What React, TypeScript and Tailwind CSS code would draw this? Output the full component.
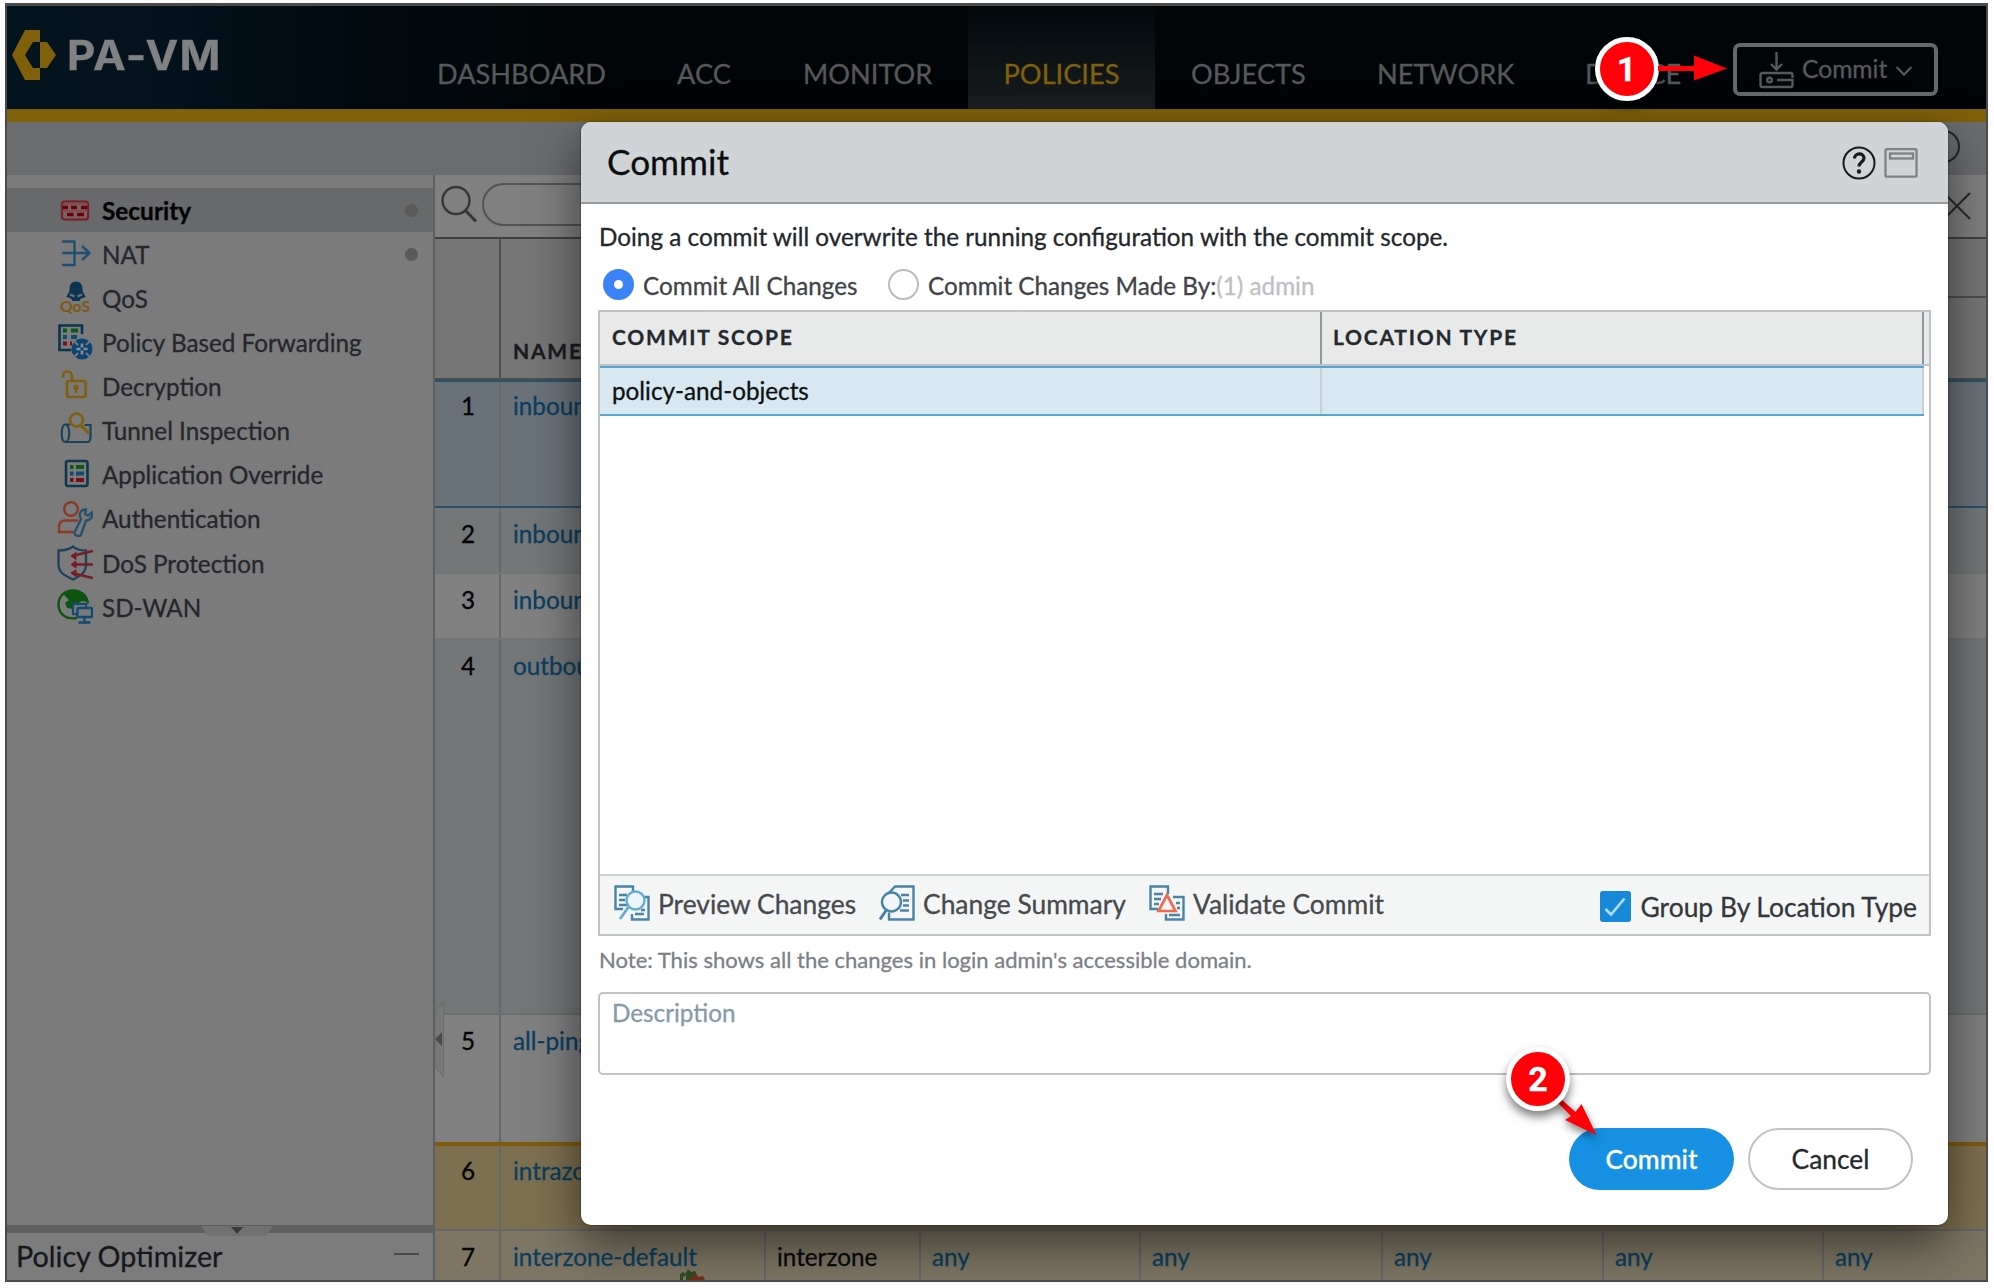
import React from "react";

function Circle({ n }: { n: string }) {
  return (
    <div className="flex size-[64px] items-center justify-center rounded-full border-[5px] border-white bg-[#fe0008] font-['Roboto',sans-serif] text-[34px] leading-none font-bold text-white shadow-[0_6px_10px_rgba(0,0,0,0.5)]">
      {n}
    </div>
  );
}

/* Sidebar icons, each drawn on a 36 x 36 canvas */
const ICONS: Record<string, React.ReactNode> = {
  security: (
    <g fill="none" stroke="#7b1d24" strokeWidth="2.2">
      <rect x="5" y="9.500" width="26" height="18" rx="2.500" fill="#7d6265" />
      <path d="M6 15.500h5M14 15.500h6M24 15.500h6M10 22.500h6.500M20 22.500h7" stroke="#6b0008" strokeWidth="3.600" />
      <path d="M5 19h26M5 12h26" stroke="#80484c" strokeWidth="1.400" />
    </g>
  ),
  nat: (
    <g fill="none" stroke="#1f5074" strokeWidth="2.4" strokeLinejoin="round">
      <path d="M5 5.500h12.500v23.500H5M5 17h27M25 10l7.500 7-7.500 7" />
    </g>
  ),
  qos: (
    <g>
      <path d="M19 1.500c-5 0-6.500 4-6.500 8 0 4-3 5.500-3 7.500 3 1 5 1 6 4h7c1-3 3-3 6-4 0-2-3-3.500-3-7.500 0-4-1.500-8-6.500-8z" fill="#0b3450" />
      <path d="M13 14.500l4.500 2M25 14.500l-4.500 2" stroke="#6b7478" strokeWidth="2" />
      <text x="3" y="32" fontFamily="Lato" fontSize="16" fontWeight="700" fill="#7c5a12" textLength="30" lengthAdjust="spacingAndGlyphs">QoS</text>
    </g>
  ),
  pbf: (
    <g fill="none">
      <path d="M25 10V1.500H2.500v24.500h12" stroke="#0b3450" strokeWidth="2.600" />
      <path d="M6 6.500h4M14 6.500h7" stroke="#0c5a14" strokeWidth="4" />
      <path d="M6 13h4M14 13h6" stroke="#104a75" strokeWidth="4" />
      <path d="M6 19.500h4M13 19.500h2" stroke="#7b0d16" strokeWidth="4" />
      <circle cx="25" cy="25" r="10.500" fill="#0d4570" />
      <path d="M17.500 17.500l3.500 3.500M32.500 32.500l-3.500-3.500M17.500 32.500l3.500-3.500M32.500 17.500l-3.500 3.500" stroke="#7b7b7b" strokeWidth="1.800" />
      <path d="M19.500 25h4M26.500 25h4M25 19.500v4M25 26.500v4" stroke="#8a9094" strokeWidth="2.600" />
    </g>
  ),
  decryption: (
    <g fill="none" stroke="#80600f" strokeWidth="2.600">
      <rect x="10" y="13" width="18.500" height="16" rx="2" />
      <path d="M6 10V8c0-6 9-6 9 0v5" />
      <circle cx="19" cy="19.500" r="2.500" fill="#80600f" strokeWidth="1" />
      <path d="M19 20v5" />
    </g>
  ),
  tunnel: (
    <g fill="none" stroke="#1c435c" strokeWidth="2.200">
      <path d="M13 12.500H8.500c-5 0-5 17.500 0 17.500h22c2 0 3-2 3-6V13h-6" />
      <path d="M8.500 12.500c5 1 5 16.500 0 17.500" />
      <circle cx="19.500" cy="8" r="6.500" stroke="#80600f" strokeWidth="2.600" />
      <path d="M23.500 13l8.500 8.500" stroke="#80600f" strokeWidth="3" />
    </g>
  ),
  override: (
    <g fill="none">
      <rect x="9" y="4" width="21.500" height="25" rx="2" stroke="#0f3850" strokeWidth="2.600" />
      <path d="M13 10h3.500M19 10h8" stroke="#0c5a14" strokeWidth="4" />
      <path d="M13 16.500h3.500M19 16.500h8" stroke="#104a75" strokeWidth="4" />
      <path d="M13 23h3.500M19 23h8" stroke="#7b0d16" strokeWidth="4" />
    </g>
  ),
  auth: (
    <g fill="none" stroke="#8b3a28" strokeWidth="2.400">
      <circle cx="14" cy="8" r="6.800" />
      <path d="M16 31H2v-5c0-5 3-6.500 6-6.500h13" />
      <path d="M24 18c-3-5 0-10 5-9.500l-1 4.500 3 1.500 4-3c1 5-2 8-6 8l-5 14c-1 3-7.500 1-6.500-2z" stroke="#28506c" />
    </g>
  ),
  dos: (
    <g fill="none">
      <path d="M16 1.500c-4 3-8 4-14.500 4v14c0 8 6 11 14.500 15 8-4 13-7 13-15V5.500c-6 0-10-1-13-4z" stroke="#1d415c" strokeWidth="2.300" />
      <path d="M15 11L36 6M15 19.500h21M15 28l21 5" stroke="#781b25" strokeWidth="2.600" />
      <path d="M14 11l5-3.500v7zM14 19.500l5-3.500v7zM14 28l5-3v6.500z" fill="#781b25" stroke="#781b25" />
    </g>
  ),
  sdwan: (
    <g fill="none">
      <path d="M20 29C8 31 1 24 1.500 14.500 2 7 8 1.500 16 1.500c8 0 14 5 15 13" stroke="#0c5410" strokeWidth="2.400" />
      <path d="M7 6c3-3 10-5 14-4 5 2 8 6 9 11l-5-1-5 3-4 5-6-1-2-5 4-3-3-3z" fill="#0c5410" />
      <rect x="16" y="15" width="13" height="10" fill="#7b7b7b" stroke="#134a72" strokeWidth="2.200" />
      <rect x="20.500" y="19" width="14.500" height="9" rx="1" fill="#7b7b7b" stroke="#134a72" strokeWidth="2.400" />
      <path d="M27.500 29v4M21.500 33.500h12" stroke="#134a72" strokeWidth="2.400" />
    </g>
  ),
};

const SIDE: { id: string; label: string; dot?: boolean }[] = [
  { id: "security", label: "Security", dot: true },
  { id: "nat", label: "NAT", dot: true },
  { id: "qos", label: "QoS" },
  { id: "pbf", label: "Policy Based Forwarding" },
  { id: "decryption", label: "Decryption" },
  { id: "tunnel", label: "Tunnel Inspection" },
  { id: "override", label: "Application Override" },
  { id: "auth", label: "Authentication" },
  { id: "dos", label: "DoS Protection" },
  { id: "sdwan", label: "SD-WAN" },
];

function Header() {
  const tab = "flex h-full shrink-0 items-end whitespace-nowrap pb-[20px] text-[27.2px] leading-[30px] text-[#575859]";
  return (
    <header className="flex h-[103px] shrink-0 bg-[linear-gradient(90deg,#04141f_0px,#04131d_130px,#010a10_340px,#010507_560px)]">
      <div className="flex w-[430px] shrink-0 pt-[24px] pl-[5px]">
        <svg width="44" height="50" viewBox="0 0 44 50" className="shrink-0">
          <path d="M13 0h15v12h-7l-8 13 8 13h7v12H13L0 25z" fill="#80600a" />
          <path d="M28 12h7l9 13-9 13h-7z" fill="#80600a" />
        </svg>
        <div className="ml-[11px] origin-left scale-x-[1.07] font-['Inter'] text-[41px] leading-[50px] font-bold tracking-[1.2px] whitespace-nowrap text-[#808183]">PA-VM</div>
      </div>
      <nav className="flex">
        <div className={tab + " w-[240px]"}>DASHBOARD</div>
        <div className={tab + " w-[126px]"}>ACC</div>
        <div className={tab + " w-[165px]"}>MONITOR</div>
        <div className="flex h-full w-[187px] shrink-0 items-end justify-center bg-linear-to-b from-[#02070a] to-[#1b1e20] pb-[20px] text-[27.200px] leading-[30px] text-[#80600a]">POLICIES</div>
        <div className={tab + " w-[222px] pl-[36px]"}>OBJECTS</div>
        <div className={tab + " w-[208px]"}>NETWORK</div>
        <div className={tab + " w-[148px]"}>DEVICE</div>
      </nav>
      <button className="mt-[37px] flex h-[53px] w-[205px] shrink-0 items-center rounded-[7px] border-4 border-[#67686a] pl-[22px] text-[#58595b]">
        <svg width="35" height="38" viewBox="0 0 35 38" fill="none" stroke="#58595b" strokeWidth="2.400" className="shrink-0">
          <path d="M17.500 1v17M12 13l5.500 5.500L23 13" />
          <path d="M33.500 27v-3q0-2-2-2h-28q-2 0-2 2v10q0 2 2 2h28q2 0 2-2v-5H18" />
          <circle cx="10.500" cy="29" r="2.300" />
        </svg>
        <span className="ml-[8px] w-[84px] shrink-0 text-[24.600px] leading-none">Commit</span>
        <svg width="18" height="12" viewBox="0 0 18 12" fill="none" stroke="#58595b" strokeWidth="2.200" className="mt-[2px] ml-[9px] shrink-0">
          <path d="M1.500 2L9 9.500 16.500 2" />
        </svg>
      </button>
    </header>
  );
}

function Sidebar() {
  return (
    <aside className="flex w-[428px] shrink-0 flex-col border-r-2 border-[#5c6064] bg-[#7b7b7b]">
      <div className="mt-[13px] flex flex-col">
        {SIDE.map((s, i) => (
          <div key={s.id} className={i === 0 ? "flex h-[44px] items-center bg-[#67696a] pl-[50px]" : "flex h-[44.100px] items-center pl-[50px]"}>
            <svg width="36" height="36" viewBox="0 0 36 36" className="shrink-0">{ICONS[s.id]}</svg>
            <span className={i === 0 ? "mt-[2px] ml-[9px] text-[24.400px] leading-none font-bold text-[#020405]" : "mt-[2px] ml-[9px] text-[24.250px] leading-none text-[#24272b]"}>{s.label}</span>
            {s.dot && <span className="mr-[15px] ml-auto size-[13px] rounded-full bg-[#5a5a5a]" />}
          </div>
        ))}
      </div>
      <div className="mt-auto flex h-[8px] shrink-0 bg-[#5c5e60] pl-[194px]">
        <svg width="72" height="11" viewBox="0 0 72 11" className="relative shrink-0">
          <path d="M0 1h72l-7 10H7z" fill="#707172" />
          <path d="M30 2h12l-6 7z" fill="#3a3b3c" />
        </svg>
      </div>
      <div className="flex h-[47px] shrink-0 items-center bg-[#7c7c7c] pr-[14px] pl-[9px]">
        <span className="text-[28.700px] leading-none text-[#15181b]">Policy Optimizer</span>
        <span className="mb-[5px] ml-auto h-[2px] w-[25px] bg-[#4a4b4c]" />
      </div>
    </aside>
  );
}

function Rule({ n, name, row }: { n: string; name: string; row: string }) {
  return (
    <div className={"flex shrink-0 text-[24.250px] leading-[28px] " + row}>
      <div className="w-[64px] shrink-0 pt-(--top) pl-[2px] text-center text-[#020304]">{n}</div>
      <div className="flex grow border-l-2 border-[#67696b] pt-(--top) pl-[12px] text-[#0b3e61]">{name}</div>
    </div>
  );
}

function Main() {
  const cell = "h-full shrink-0 border-l-2 border-[#65676a] pt-[12px] pl-[11px] text-[#0b3e61]";
  return (
    <main className="relative flex min-w-0 grow flex-col overflow-hidden bg-[#808080]">
      <div className="flex h-[64px] shrink-0 items-center border-b-2 border-[#3f4142]">
        <svg width="38" height="38" viewBox="0 0 38 38" fill="none" stroke="#34373a" strokeWidth="2.400" className="mb-[4px] ml-[5px] shrink-0">
          <circle cx="16" cy="15.500" r="13.500" />
          <path d="M25.500 25.500l10.500 11" strokeWidth="3" />
        </svg>
        <div className="mb-[3px] ml-[4px] h-[43px] w-[1400px] shrink-0 rounded-full border-2 border-[#515355]" />
        <svg width="28" height="28" viewBox="0 0 28 28" stroke="#2a2c2d" strokeWidth="2.200" className="ml-[61px] shrink-0">
          <path d="M1 1l26 26M27 1L1 27" />
        </svg>
      </div>
      <div className="flex h-[141px] shrink-0 border-b-2 border-[#4c4e4f] bg-[#757675]">
        <div className="w-[64px]" />
        <div className="flex w-[1200px] items-end border-l-2 border-[#4b4f52] pb-[13px] pl-[12px] text-[21px] leading-[28px] font-bold tracking-[1.800px] text-[#191c1f]">NAME</div>
        <div className="h-[59px] grow border-b-2 border-[#4b4f52]" />
      </div>
      <Rule n="1" name="inbound" row="h-[128px] border-y-2 border-[#28536d] bg-[#6a7279] [--top:10px]" />
      <Rule n="2" name="inbound" row="h-[66px] border-b-2 border-[#727475] bg-[#737777] [--top:12px]" />
      <Rule n="3" name="inbound" row="h-[66px] border-b-2 border-[#727475] [--top:12px]" />
      <Rule n="4" name="outbound" row="h-[375px] border-b-2 border-[#6b6e6f] bg-[#737777] [--top:12px]" />
      <Rule n="5" name="all-ping" row="h-[127px] [--top:12px]" />
      <Rule n="6" name="intrazone-default" row="h-[87px] border-t-4 border-[#805b0c] bg-[#7d7050] [--top:11px]" />
      <div className="flex h-[60px] shrink-0 overflow-hidden border-t-2 border-[#65676a] bg-[#7e7663] text-[24.250px] leading-[28px]">
        <div className="w-[64px] shrink-0 pt-[12px] pl-[2px] text-center text-[#020304]">7</div>
        <div className={cell + " relative w-[265px] pl-[12px]"}>
          interzone-default
          <svg width="28" height="14" viewBox="0 0 28 14" className="absolute top-[37px] left-[177px]">
            <path d="M2 14V6l3-2 2 2 3-5 3 3 4-1 2 4v7z" fill="#2e4d22" />
            <path d="M5 14V9l3-2v7z" fill="#7e7663" />
            <path d="M9 14l3-5 3 1 2-4 4 3 4-1 3 6z" fill="#7a2c1c" />
          </svg>
        </div>
        <div className={cell + " w-[155px]"}><span className="text-[#080a0b]">interzone</span></div>
        <div className={cell + " w-[220px]"}>any</div>
        <div className={cell + " w-[242px]"}>any</div>
        <div className={cell + " w-[221px]"}>any</div>
        <div className={cell + " w-[220px]"}>any</div>
        <div className={cell + " w-[220px]"}>any</div>
      </div>
      <svg width="10" height="78" viewBox="0 0 10 78" className="absolute top-[825px] left-0">
        <path d="M0 11L8.500 1v76L0 67z" fill="#777878" stroke="#6b6c6c" />
        <path d="M0 39l7-7v14z" fill="#484a4b" />
      </svg>
    </main>
  );
}

function Modal() {
  const tool = "flex items-center text-[26.400px] leading-none whitespace-nowrap text-[#464a4e]";
  return (
    <section className="absolute top-[122px] left-[581px] flex h-[1103px] w-[1367px] flex-col overflow-hidden rounded-[10px] bg-white">
      <div className="flex h-[82px] shrink-0 items-center border-b-2 border-[#979ca0] bg-[#d0d4d7] pr-[30px] pl-[26px]">
        <h1 className="text-[35.200px] leading-none text-[#0b0d0f]">Commit</h1>
        <svg width="34" height="34" viewBox="0 0 34 34" fill="none" stroke="#17191b" className="mt-[2px] ml-auto">
          <circle cx="17" cy="17" r="15.500" strokeWidth="2" />
          <path d="M12.500 12.500c0-6 9.500-6 9.500-.5 0 4-5 4-5 8.500" strokeWidth="3.200" />
          <circle cx="17" cy="25.500" r="1.200" strokeWidth="2" />
        </svg>
        <svg width="34" height="30" viewBox="0 0 34 30" fill="none" stroke="#7d8286" strokeWidth="2.300" className="mt-[2px] ml-[8px]">
          <rect x="1.500" y="1.200" width="31" height="27.500" rx="1" />
          <rect x="6" y="5.500" width="23" height="5" />
        </svg>
      </div>
      <div className="flex flex-col px-[17px]">
        <p className="mt-[19px] h-[28px] pl-px text-[24.280px] leading-[28px] whitespace-nowrap text-[#23272c]">Doing a commit will overwrite the running configuration with the commit scope.</p>
        <div className="mt-[17px] flex h-[32px] items-center pl-[5px] text-[24.250px] leading-none whitespace-nowrap text-[#3f4347]">
          <span className="flex size-[31px] items-center justify-center rounded-full bg-[#3983f6]">
            <span className="size-[9px] rounded-full bg-white" />
          </span>
          <span className="mt-[5px] ml-[9px] w-[245px]">Commit All Changes</span>
          <span className="size-[31px] rounded-full border-[2.500px] border-[#bcbcbc] bg-white" />
          <span className="mt-[5px] ml-[9px]">Commit Changes Made By:<span className="text-[#bcc0c3]">(1) admin</span></span>
        </div>
        <div className="mt-[10px] flex h-[626px] w-[1333px] flex-col border-2 border-[#bfc2c7]">
          <div className="flex h-[54px] shrink-0 items-center border-b-2 border-[#bfc2c7] bg-[#e8eae9] text-[21px] leading-none font-bold tracking-[1.750px] text-[#24292e]">
            <div className="flex h-full w-[720px] items-center pb-[3px] pl-[12px]">COMMIT SCOPE</div>
            <div className="flex h-full w-[604px] items-center border-x-2 border-[#8f9699] pb-[3px] pl-[11px]">LOCATION TYPE</div>
          </div>
          <div className="flex h-[50px] w-[1324px] shrink-0 items-center border-y-2 border-[#56a6d3] bg-[#d7e8f0] text-[24.250px] leading-none text-[#0d1012]">
            <div className="flex h-full w-[720px] items-center pt-px pl-[12px]">policy-and-objects</div>
            <div className="h-full w-[604px] border-x-2 border-[#c9cfd3]" />
          </div>
          <div className="mt-auto flex h-[60px] shrink-0 items-center border-t-2 border-[#cfd2d4] bg-[#f4f5f5] pr-[12px] pl-[14px]">
            <div className={tool + " w-[265px]"}>
              <svg width="36" height="36" viewBox="0 0 36 36" fill="none" stroke="#4884a6" strokeWidth="2.400" className="mr-[8px] mb-[4px] shrink-0">
                <path d="M9 24H1.500V1.500H19V6M5 10h8M5 15h6M5 20h8" />
                <path d="M18 29v5.500h16.500V12H30M21 29h9M27 25h4" />
                <circle cx="21.500" cy="15.500" r="9" stroke="#62add6" fill="#eef6fa" />
                <path d="M14.500 22L6 34" stroke="#62add6" strokeWidth="2.800" />
              </svg>
              <span className="mb-[2px]">Preview Changes</span>
            </div>
            <div className={tool + " w-[270px]"}>
              <svg width="36" height="36" viewBox="0 0 36 36" fill="none" stroke="#4884a6" strokeWidth="2.400" className="mr-[8px] mb-[4px] shrink-0">
                <path d="M9 9l7-7.500h18.500v33H10v-7M22 10h8M24 15.500h6M24 20.500h6M21 25.500h9" />
                <circle cx="12.500" cy="17" r="9.500" />
                <path d="M7 25.500L1 34.500" strokeWidth="3" />
              </svg>
              <span className="mb-[2px]">Change Summary</span>
            </div>
            <div className={tool}>
              <svg width="36" height="36" viewBox="0 0 36 36" fill="none" stroke="#4884a6" strokeWidth="2.400" className="mr-[8px] mb-[4px] shrink-0">
                <path d="M9 24H1.500V1.500H19V9M5 9h9M5 14h7M5 19h5" />
                <path d="M17 29v5.500h17.500V12H24M27 18h4M28 23h3M20 30h11" />
                <path d="M18 10l8.500 16h-17z" stroke="#ee6a50" strokeWidth="2.700" fill="#f4f5f5" />
              </svg>
              <span className="mb-[2px]">Validate Commit</span>
            </div>
            <div className="mt-[3px] ml-auto flex items-center">
              <span className="flex size-[31px] items-center justify-center rounded-[3px] bg-[#168ad9]">
                <svg width="22" height="20" viewBox="0 0 22 20" fill="none" stroke="#b5daf2" strokeWidth="2.600"><path d="M1.500 12l5.500 5.500L20.500 1.500" /></svg>
              </span>
              <span className="mt-[2px] ml-[10px] text-[26.400px] leading-none whitespace-nowrap text-[#33373b]">Group By Location Type</span>
            </div>
          </div>
        </div>
        <p className="mt-[11px] h-[26px] pl-px text-[22.050px] leading-[26px] text-[#7b8186]">Note: This shows all the changes in login admin's accessible domain.</p>
        <div className="mt-[19px] h-[83px] w-[1333px] rounded-[5px] border-2 border-[#bfc2c7] pt-[5px] pl-[12px] text-[24.250px] leading-[28px] text-[#849aa7]">Description</div>
        <div className="mt-[53px] flex justify-end gap-[14px] pr-[18px] text-[26.400px] leading-none">
          <button className="h-[62px] w-[165px] rounded-full bg-[#1690e2] pt-px font-medium text-white">Commit</button>
          <button className="h-[62px] w-[165px] rounded-full border-2 border-[#bfc2c7] bg-white pt-px text-[#24292e]">Cancel</button>
        </div>
      </div>
    </section>
  );
}

export default function App() {
  return (
    <div className="relative h-[1288px] w-[1994px] overflow-hidden bg-[#fdfdfd] pt-[3px] pl-[5px] font-['Lato',sans-serif] [-webkit-text-stroke:0.3px]">
      <div className="flex h-[1279px] w-[1983px] flex-col overflow-hidden border-2 border-t-[3px] border-[#4a4b4c] bg-[#7b7b7b]">
        <Header />
        <div className="h-[13px] shrink-0 bg-[#80600a]" />
        <div className="flex h-[53px] shrink-0 items-center justify-end bg-[#6b6c6e] pr-[26px]">
          <span className="mb-[5px] size-[33px] rounded-full border-2 border-[#232526]" />
        </div>
        <div className="flex min-h-0 grow">
          <Sidebar />
          <Main />
        </div>
      </div>
      <div className="absolute top-[6px] left-[7px] h-[1274px] w-[1979px] overflow-hidden">
        <div className="absolute top-[116px] left-[574px] h-[1103px] w-[1367px] rounded-[10px] shadow-[0_18px_50px_rgba(0,0,0,0.55),0_0_2px_rgba(0,0,0,0.6)]" />
      </div>
      <Modal />
      <div className="absolute top-[36.500px] left-[1594.500px]"><Circle n="1" /></div>
      <svg width="72" height="28" viewBox="0 0 72 28" className="absolute top-[54px] left-[1656px]">
        <path d="M2 12h36V1.500l33 13-33 12V17H2z" fill="#fe0008" />
      </svg>
      <svg width="60" height="60" viewBox="0 0 60 60" className="absolute top-[1085px] left-[1548px] overflow-visible [filter:drop-shadow(0_4px_4px_rgba(0,0,0,0.5))]">
        <path d="M12 13l15.500 14L33.500 19l15 31L17 35l6-4L8 16z" fill="#fe0008" />
      </svg>
      <div className="absolute top-[1047px] left-[1506px]"><Circle n="2" /></div>
    </div>
  );
}
